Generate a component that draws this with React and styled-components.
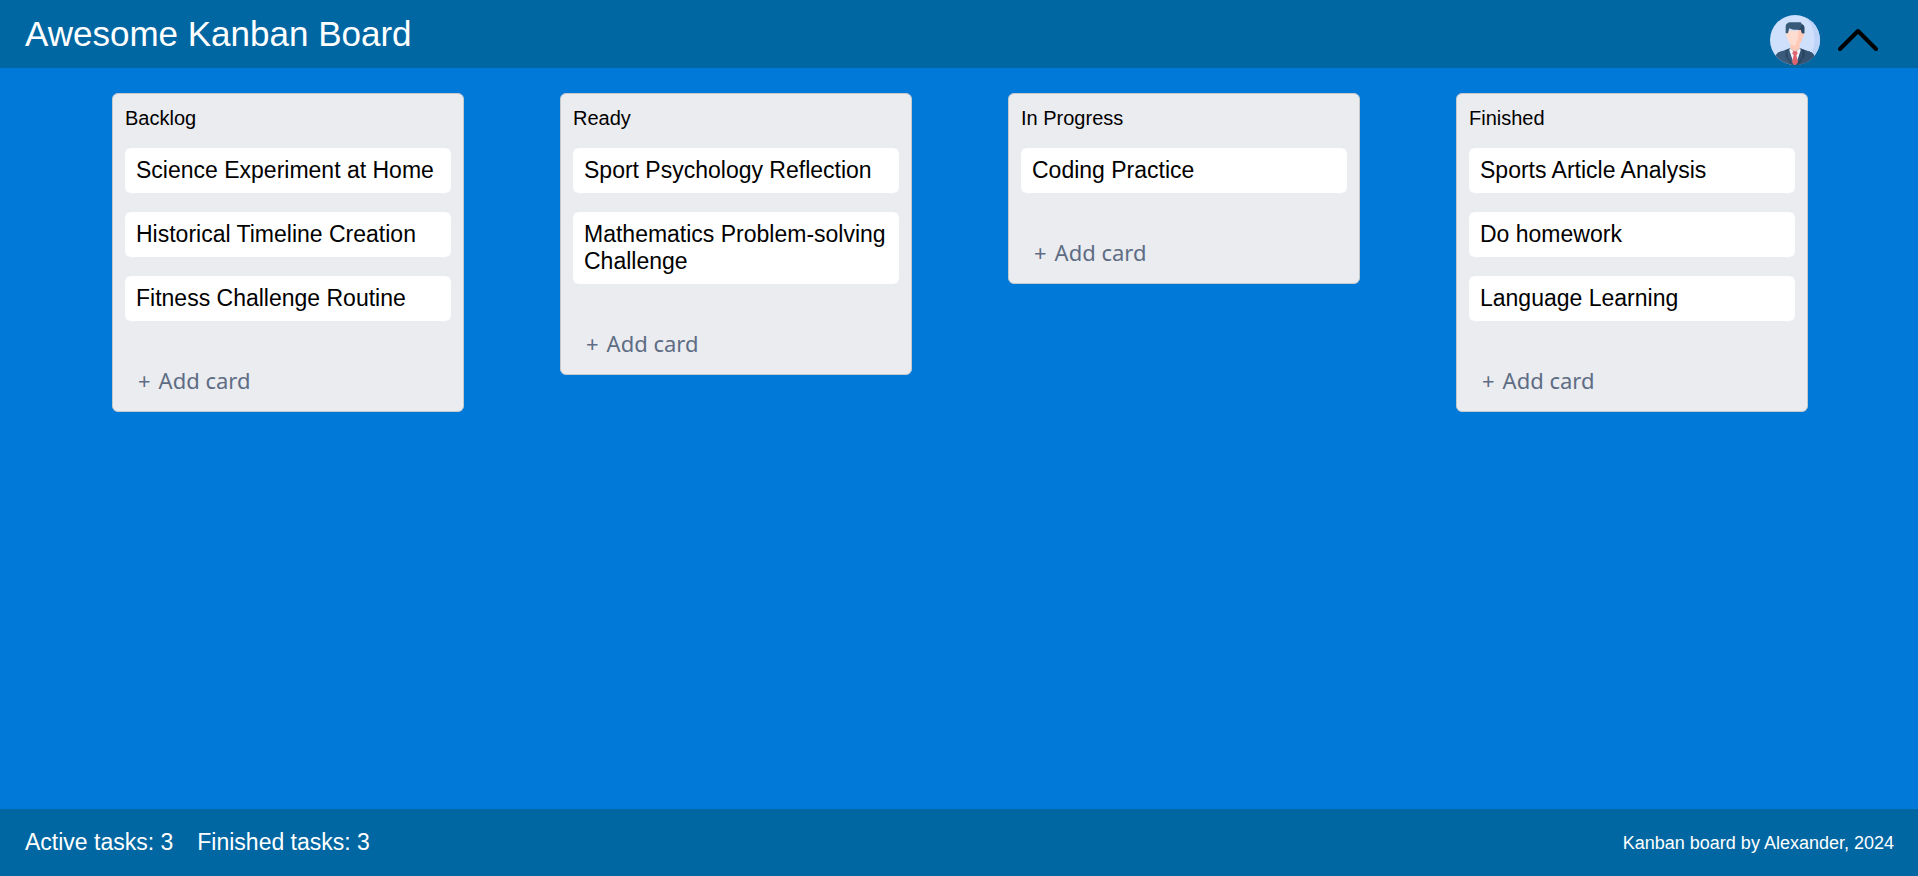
import React from 'react';
import styled, { createGlobalStyle } from 'styled-components';

const GlobalStyle = createGlobalStyle`
  *, *::before, *::after { box-sizing: border-box; }
  body {
    margin: 0;
    background: #0079d8;
    font-family: "Liberation Sans", Arial, sans-serif;
    color: #000;
  }
`;

const Page = styled.div`
  display: flex;
  flex-direction: column;
  min-height: 100vh;
`;

const Header = styled.header`
  display: flex;
  align-items: center;
  justify-content: space-between;
  height: 68px;
  padding: 0 40px 0 25px;
  background: #0067a3;
`;

const Title = styled.h1`
  margin: 0;
  color: #fff;
  font-size: 35px;
  font-weight: 400;
  line-height: 40px;
`;

const UserButton = styled.button`
  display: flex;
  align-items: center;
  gap: 18px;
  margin: 0;
  padding: 12px 0 0;
  border: 0;
  background: none;
  cursor: pointer;
  svg { display: block; }
`;

const Board = styled.main`
  flex: 1;
  display: grid;
  grid-template-columns: repeat(4, minmax(0, 1fr));
  align-items: start;
  gap: 96px;
  padding: 25px 110px 25px 112px;
`;

const Column = styled.section`
  padding: 12px 12px 8px;
  border: 1px solid #c4c9cc;
  border-radius: 6px;
  background: #ebecf0;
`;

const ColumnTitle = styled.h2`
  margin: 0 0 18px;
  font-size: 20px;
  font-weight: 400;
  line-height: 24px;
`;

const Cards = styled.ul`
  display: flex;
  flex-direction: column;
  gap: 19px;
  margin: 0 0 37px;
  padding: 0;
  list-style: none;
`;

const Card = styled.li`
  padding: 9px 8px 9px 11px;
  border-radius: 6px;
  background: #fff;
  font-size: 23px;
  line-height: 27px;
`;

const AddButton = styled.button`
  display: flex;
  align-items: center;
  gap: 8px;
  height: 45px;
  padding: 0 13px;
  border: 0;
  background: none;
  color: #5e6c84;
  font-family: "Noto Sans", sans-serif;
  font-size: 22px;
  line-height: 27px;
  cursor: pointer;
`;

const Footer = styled.footer`
  display: flex;
  align-items: center;
  justify-content: space-between;
  height: 67px;
  padding: 0 24px 0 25px;
  background: #0067a3;
  color: #fff;
`;

const Counters = styled.div`
  display: flex;
  gap: 24px;
  font-size: 23px;
  line-height: 27px;
`;

const Credit = styled.p`
  margin: 0;
  font-size: 18px;
  line-height: 20px;
`;

const columns = [
  {
    title: 'Backlog',
    tasks: ['Science Experiment at Home', 'Historical Timeline Creation', 'Fitness Challenge Routine'],
  },
  {
    title: 'Ready',
    tasks: ['Sport Psychology Reflection', 'Mathematics Problem-solving Challenge'],
  },
  { title: 'In Progress', tasks: ['Coding Practice'] },
  {
    title: 'Finished',
    tasks: ['Sports Article Analysis', 'Do homework', 'Language Learning'],
  },
];

const Avatar = () => (
  <svg width="50" height="50" viewBox="0 0 150 150" aria-hidden="true">
    <defs>
      <clipPath id="avatar-circle">
        <circle cx="75" cy="75" r="75" />
      </clipPath>
    </defs>
    <g clipPath="url(#avatar-circle)">
      <rect width="150" height="150" fill="#cfe0fd" />
      <path d="M98 0C124 20 134 48 133 76C132 100 126 116 118 126H150V0Z" fill="#bdd3f8" />
      <path d="M16 150V124C20 114 28 109 40 107L60 99H90L110 107C122 109 130 114 134 124V150Z" fill="#3b5b7c" />
      <path d="M92 101L110 107C122 109 130 114 134 124V150H78Z" fill="#345272" />
      <path d="M60 99L75 112L90 99L92 106L79 145H71L58 106Z" fill="#f4f7fc" />
      <path d="M61 84H89V100L75 112L61 100Z" fill="#ffc9b8" />
      <path d="M48 47H102V60C102 62 99 65 98 66C97 78 88 91 75 93C62 91 53 78 52 66C49 65 48 62 48 60Z" fill="#ffdcd0" />
      <path d="M85 44H102V60C102 62 99 65 98 66C97 78 88 91 75 93C80 80 86 70 85 44Z" fill="#ffc9b8" />
      <path d="M47 55V35C47 27 54 22 62 22H91C94 22 95 26 95 28C101 29 103 33 103 38V55H96C94 51 94 45 92 44H70C65 44 60 40 58 40C56 44 56 51 54 55Z" fill="#385a79" />
      <path d="M95 28C101 29 103 33 103 38V55H96C94 51 94 45 92 44H82C92 42 94 36 95 28Z" fill="#2a4965" />
      <path d="M69 109H81L83 116L79 120L84 142L77 150H73L66 142L71 120L67 116Z" fill="#df6470" />
      <path d="M58 102L51 113L55 118L52 122L69 150H65L46 124L47 106Z" fill="#2d4966" />
      <path d="M92 102L99 113L95 118L98 122L81 150H85L104 124L103 106Z" fill="#294560" />
    </g>
  </svg>
);

const Chevron = () => (
  <svg width="40" height="24" viewBox="0 0 40 24" aria-hidden="true">
    <path d="M2 21L20 3L38 21" fill="none" stroke="#000" strokeWidth="4" strokeLinecap="round" strokeLinejoin="round" />
  </svg>
);

export default function App() {
  return (
    <>
      <GlobalStyle />
      <Page>
        <Header>
          <Title>Awesome Kanban Board</Title>
          <UserButton type="button" aria-label="User menu">
            <Avatar />
            <Chevron />
          </UserButton>
        </Header>
        <Board>
          {columns.map(({ title, tasks }) => (
            <Column key={title}>
              <ColumnTitle>{title}</ColumnTitle>
              <Cards>
                {tasks.map((task) => (
                  <Card key={task}>{task}</Card>
                ))}
              </Cards>
              <AddButton type="button">
                <span>+</span> <span>Add card</span>
              </AddButton>
            </Column>
          ))}
        </Board>
        <Footer>
          <Counters>
            <span>Active tasks: {columns[0].tasks.length}</span>
            <span>Finished tasks: {columns[3].tasks.length}</span>
          </Counters>
          <Credit>Kanban board by Alexander, 2024</Credit>
        </Footer>
      </Page>
    </>
  );
}
